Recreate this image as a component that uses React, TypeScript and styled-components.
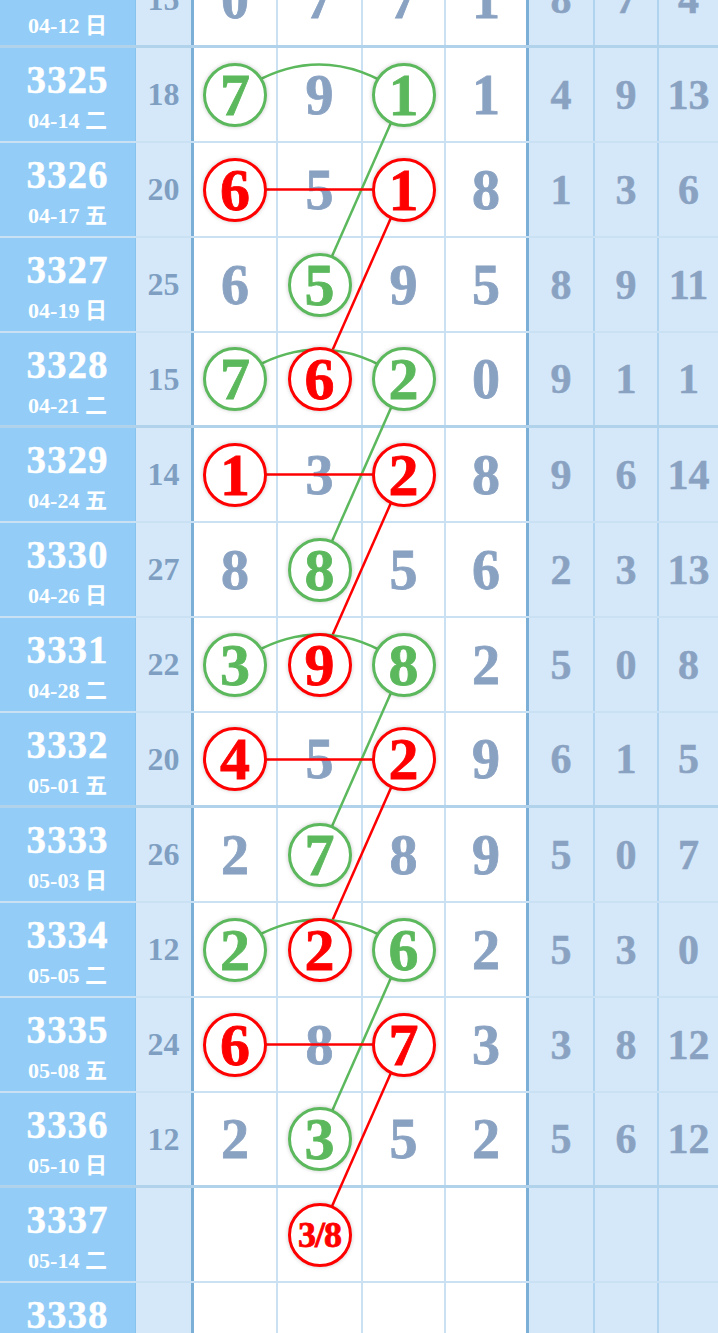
import React from 'react';
import styled, { createGlobalStyle } from 'styled-components';

const ROW_H = 95;
const GREEN = '#5cb85c';
const RED = '#ff0000';
const INK = '#8aa2c2';
const LINE = 'rgba(120, 180, 225, 0.4)';
const LINE_HEAVY = 'rgba(100, 165, 215, 0.5)';
const DIVIDER = '#7bafd6';
const SERIF = '"Liberation Serif", "Noto Sans CJK SC", serif';

// x centre of the main columns (index 0..3) inside the table
const MAIN_X = [235, 319.5, 403.5, 486];
const rowY = (i: number) => i * ROW_H + 46.5;

type Mark = 'g' | 'r' | undefined;

interface Draw {
	issue: string;
	date: string;
	sum?: string;
	main: string[];
	marks: Mark[];
	side: string[];
}

const rows: Draw[] = [
	{ issue: '3324', date: '04-12 日', sum: '15', main: ['0', '7', '7', '1'], marks: [], side: ['8', '7', '4'] },
	{ issue: '3325', date: '04-14 二', sum: '18', main: ['7', '9', '1', '1'], marks: ['g', undefined, 'g'], side: ['4', '9', '13'] },
	{ issue: '3326', date: '04-17 五', sum: '20', main: ['6', '5', '1', '8'], marks: ['r', undefined, 'r'], side: ['1', '3', '6'] },
	{ issue: '3327', date: '04-19 日', sum: '25', main: ['6', '5', '9', '5'], marks: [undefined, 'g'], side: ['8', '9', '11'] },
	{ issue: '3328', date: '04-21 二', sum: '15', main: ['7', '6', '2', '0'], marks: ['g', 'r', 'g'], side: ['9', '1', '1'] },
	{ issue: '3329', date: '04-24 五', sum: '14', main: ['1', '3', '2', '8'], marks: ['r', undefined, 'r'], side: ['9', '6', '14'] },
	{ issue: '3330', date: '04-26 日', sum: '27', main: ['8', '8', '5', '6'], marks: [undefined, 'g'], side: ['2', '3', '13'] },
	{ issue: '3331', date: '04-28 二', sum: '22', main: ['3', '9', '8', '2'], marks: ['g', 'r', 'g'], side: ['5', '0', '8'] },
	{ issue: '3332', date: '05-01 五', sum: '20', main: ['4', '5', '2', '9'], marks: ['r', undefined, 'r'], side: ['6', '1', '5'] },
	{ issue: '3333', date: '05-03 日', sum: '26', main: ['2', '7', '8', '9'], marks: [undefined, 'g'], side: ['5', '0', '7'] },
	{ issue: '3334', date: '05-05 二', sum: '12', main: ['2', '2', '6', '2'], marks: ['g', 'r', 'g'], side: ['5', '3', '0'] },
	{ issue: '3335', date: '05-08 五', sum: '24', main: ['6', '8', '7', '3'], marks: ['r', undefined, 'r'], side: ['3', '8', '12'] },
	{ issue: '3336', date: '05-10 日', sum: '12', main: ['2', '3', '5', '2'], marks: [undefined, 'g'], side: ['5', '6', '12'] },
	{ issue: '3337', date: '05-14 二', main: ['', '3/8', '', ''], marks: [undefined, 'r'], side: ['', '', ''] },
	{ issue: '3338', date: '05-17 五', main: ['', '', '', ''], marks: [], side: ['', '', ''] },
];

const GlobalStyle = createGlobalStyle`
	html, body {
		margin: 0;
		padding: 0;
		background: #fff;
		overflow: hidden;
	}
`;

const Page = styled.div`
	width: 718px;
	height: 1333px;
	overflow: hidden;
	font-family: ${SERIF};
	font-weight: 700;
`;

const Table = styled.div`
	position: relative;
	margin-top: -47px;
`;

const Row = styled.div<{ $heavy: boolean }>`
	display: grid;
	grid-template-columns: 136px 58px 82px 85px 83px 82px 67px 64px 61px;
	height: ${ROW_H}px;
	box-sizing: border-box;
	border-bottom: ${(p) => (p.$heavy ? `3px solid ${LINE_HEAVY}` : `2px solid ${LINE}`)};
`;

const IssueCell = styled.div`
	background: #93cdf7;
	border-right: 1px solid ${LINE};
	color: #fff;
	display: flex;
	flex-direction: column;
	align-items: center;
	justify-content: center;
	gap: 12px;
	padding-top: 7px;
	box-sizing: border-box;
`;

const IssueNo = styled.div`
	font-size: 39px;
	line-height: 34px;
	letter-spacing: 1px;
	-webkit-text-stroke: 0.4px #fff;
`;

const IssueDate = styled.div`
	font-size: 22px;
	line-height: 24px;
	white-space: nowrap;
`;

const SumCell = styled.div`
	background: #d5e8f9;
	border-right: 3px solid ${DIVIDER};
	color: #7f9fc2;
	font-size: 32px;
	display: flex;
	align-items: center;
	justify-content: center;
`;

const MainCell = styled.div<{ $first?: boolean }>`
	background: #fff;
	border-left: ${(p) => (p.$first ? 'none' : `2px solid ${LINE}`)};
	color: ${INK};
	font-size: 56px;
	line-height: 1;
	-webkit-text-stroke: 0.8px ${INK};
	display: flex;
	align-items: center;
	justify-content: center;
`;

const SideCell = styled.div<{ $first?: boolean }>`
	background: #d5e8f9;
	border-left: ${(p) => (p.$first ? `3px solid ${DIVIDER}` : `2px solid ${LINE}`)};
	color: ${INK};
	font-size: 42px;
	line-height: 1;
	-webkit-text-stroke: 0.5px ${INK};
	display: flex;
	align-items: center;
	justify-content: center;
`;

const Ball = styled.div<{ $tone: 'g' | 'r'; $small?: boolean }>`
	position: relative;
	z-index: 2;
	width: 64px;
	height: 64px;
	box-sizing: border-box;
	border: 3px solid ${(p) => (p.$tone === 'g' ? GREEN : RED)};
	border-radius: 50%;
	background: #fff;
	color: ${(p) => (p.$tone === 'g' ? GREEN : RED)};
	-webkit-text-stroke: 0.8px ${(p) => (p.$tone === 'g' ? GREEN : RED)};
	font-size: ${(p) => (p.$small ? 36 : 60)}px;
	letter-spacing: ${(p) => (p.$small ? '-1px' : '0')};
	line-height: 1;
	display: flex;
	align-items: center;
	justify-content: center;
	box-shadow: 0 0 4px rgba(0, 0, 0, 0.22);
`;

const Links = styled.svg`
	position: absolute;
	top: 0;
	left: 0;
	z-index: 1;
	pointer-events: none;
`;

const TrendLines: React.FC = () => {
	const parts: React.ReactNode[] = [];
	for (let k = 0; k < 4; k++) {
		const g = 1 + k * 3;
		const r = g + 1;
		const gy = rowY(g);
		const ry = rowY(r);
		parts.push(
			<path
				key={`arc${k}`}
				d={`M ${MAIN_X[0]} ${gy} Q ${(MAIN_X[0] + MAIN_X[2]) / 2} ${gy - 60} ${MAIN_X[2]} ${gy}`}
				fill="none"
				stroke={GREEN}
				strokeWidth={2.5}
			/>,
			<line key={`gd${k}`} x1={MAIN_X[2]} y1={gy} x2={MAIN_X[1]} y2={rowY(g + 2)} stroke={GREEN} strokeWidth={2.5} />,
			<line key={`rh${k}`} x1={MAIN_X[0]} y1={ry} x2={MAIN_X[2]} y2={ry} stroke={RED} strokeWidth={2.5} />,
			<line key={`rd${k}`} x1={MAIN_X[2]} y1={ry} x2={MAIN_X[1]} y2={rowY(r + 2)} stroke={RED} strokeWidth={2.5} />
		);
	}
	return (
		<Links width={718} height={rows.length * ROW_H}>
			{parts}
		</Links>
	);
};

const App: React.FC = () => {
	return (
		<Page>
			<GlobalStyle />
			<Table>
				{rows.map((row, i) => (
					<Row key={row.issue} $heavy={i % 4 === 0}>
						<IssueCell>
							<IssueNo>{row.issue}</IssueNo>
							<IssueDate>{row.date}</IssueDate>
						</IssueCell>
						<SumCell>{row.sum}</SumCell>
						{row.main.map((n, c) => {
							const mark = row.marks[c];
							return (
								<MainCell key={c} $first={c === 0}>
									{mark ? (
										<Ball $tone={mark} $small={n.length > 1}>
											{n}
										</Ball>
									) : (
										n
									)}
								</MainCell>
							);
						})}
						{row.side.map((n, c) => (
							<SideCell key={c} $first={c === 0}>
								{n}
							</SideCell>
						))}
					</Row>
				))}
				<TrendLines />
			</Table>
		</Page>
	);
};

export default App;
